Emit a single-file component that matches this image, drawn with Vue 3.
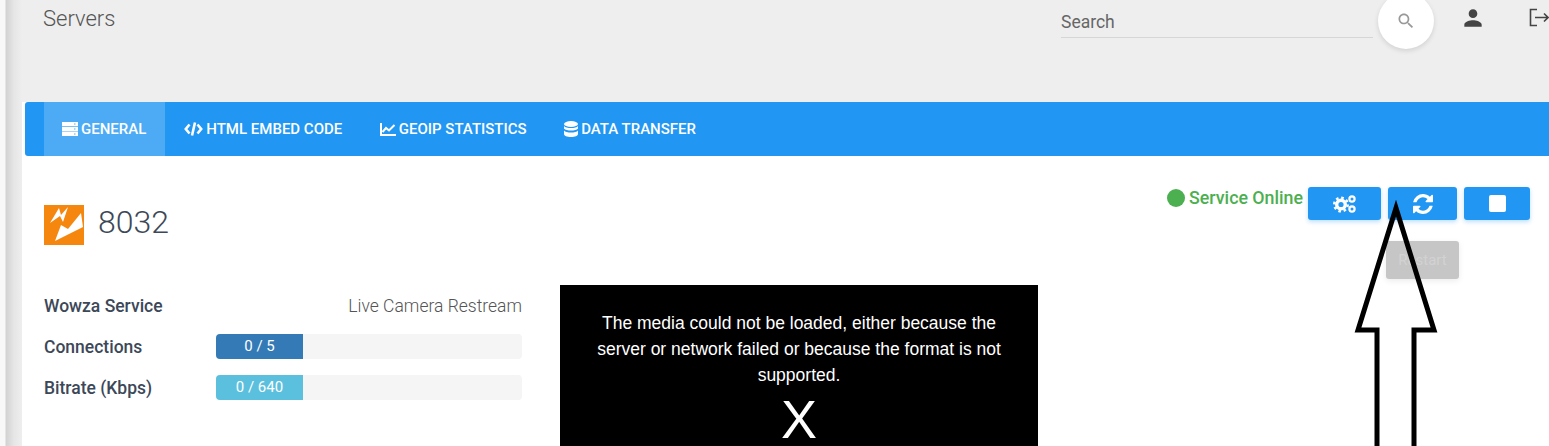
<template>
  <div class="page">
    <div class="edge"></div>
    <div class="main">
      <header class="topbar">
        <div class="page-title">Servers</div>
        <div class="search">
          <span>Search</span>
        </div>
        <button class="search-btn">
          <svg width="20" height="20" viewBox="0 0 24 24"><path fill="#999" d="M15.5 14h-.79l-.28-.27C15.41 12.59 16 11.11 16 9.5 16 5.91 13.09 3 9.5 3S3 5.91 3 9.5 5.91 16 9.5 16c1.61 0 3.09-.59 4.23-1.57l.27.28v.79l5 4.99L20.49 19l-4.99-5zm-6 0C7.01 14 5 11.99 5 9.5S7.01 5 9.5 5 14 7.01 14 9.5 11.99 14 9.5 14z"/></svg>
        </button>
        <svg class="user-icon" width="26" height="26" viewBox="0 0 24 24"><path fill="#444" d="M12 12c2.21 0 4-1.79 4-4s-1.79-4-4-4-4 1.79-4 4 1.79 4 4 4zm0 2c-2.67 0-8 1.34-8 4v2h16v-2c0-2.66-5.33-4-8-4z"/></svg>
        <svg class="logout-icon" width="20" height="20" viewBox="0 0 20 20" fill="none" stroke="#444" stroke-width="1.6"><path d="M8 1.500H1.500v16H8"/><path d="M6 9.500h13M15 5.500l4 4-4 4"/></svg>
      </header>

      <nav class="tabs">
        <a v-for="tab in tabs" :key="tab.label" class="tab" :class="{ active: tab.active }">
          <svg v-if="tab.icon === 'server'" width="16" height="14" viewBox="0 0 16 14" fill="#fff">
            <path d="M0 0h16v4.300H0zM0 4.900h16v4.300H0zM0 9.700h16V14H0z"/>
            <path fill="#5aaff3" d="M12 1.500h1.500v1H12zM12 6.500h1.500v1H12zM12 11.500h1.500v1H12z"/>
          </svg>
          <svg v-else-if="tab.icon === 'code'" width="19" height="14" viewBox="0 0 19 14" fill="none" stroke="#fff" stroke-width="2.600">
            <path d="M5.500 2.500 1.800 7l3.700 4.500M13.500 2.500 17.200 7l-3.700 4.500M11 .5 8 13.500"/>
          </svg>
          <svg v-else-if="tab.icon === 'chart'" width="16" height="13" viewBox="0 0 16 13" fill="none" stroke="#fff" stroke-width="2">
            <path d="M1 0v12h15"/>
            <path d="M2.500 9 6 5l3 2.500L14.500 2"/>
          </svg>
          <svg v-else width="14" height="16" viewBox="0 0 14 16" fill="#fff">
            <ellipse cx="7" cy="3" rx="7" ry="3"/>
            <path d="M0 5c1 1.500 4 2 7 2s6-.5 7-2v2.500c-1 1.500-4 2-7 2s-6-.5-7-2zM0 9.500c1 1.500 4 2 7 2s6-.5 7-2V13c0 1.700-3 3-7 3s-7-1.300-7-3z"/>
          </svg>
          <span>{{ tab.label }}</span>
        </a>
      </nav>

      <section class="content">
        <div class="head-row">
          <div class="server-name">
            <svg class="logo" width="40" height="40" viewBox="0 0 40 40">
              <rect width="40" height="40" fill="#f5870f"/>
              <polygon fill="#fff" points="6,18 15,3 17,10 24,2 19,17 16,11"/>
              <polygon fill="#fff" points="11,36 17,20 24,24 37,8 39,22"/>
            </svg>
            <span class="server-id">8032</span>
          </div>
          <div class="actions">
            <div class="status"><i class="dot"></i>Service Online</div>
            <button class="act act-config">
              <svg width="26" height="20" viewBox="0 0 26 20" fill="none" stroke="#fff">
                <circle cx="9" cy="10.500" r="6.800" stroke-width="2.400" stroke-dasharray="2.600 2.740"/>
                <circle cx="9" cy="10.500" r="4.300" stroke-width="3.400"/>
                <circle cx="20" cy="5" r="2.600" stroke-width="2.200"/>
                <circle cx="20" cy="15" r="2.600" stroke-width="2.200"/>
              </svg>
            </button>
            <button class="act act-restart">
              <svg width="20" height="20" viewBox="0 0 1536 1536"><path fill="#fff" d="M1511 928q0 5-1 7-64 268-268 434.500t-478 166.500q-146 0-282.500-55t-243.500-157l-129 129q-19 19-45 19t-45-19-19-45v-448q0-26 19-45t45-19h448q26 0 45 19t19 45-19 45l-137 137q71 66 161 102t187 36q134 0 250-65t186-179q11-17 53-117 8-23 30-23h192q13 0 22.500 9.500t9.500 22.500zm25-800v448q0 26-19 45t-45 19h-448q-26 0-45-19t-19-45 19-45l138-138q-148-137-349-137-134 0-250 65t-186 179q-11 17-53 117-8 23-30 23h-199q-13 0-22.500-9.500t-9.500-22.500v-7q65-268 270-434.500t480-166.500q146 0 284 55.500t245 156.500l130-129q19-19 45-19t45 19 19 45z"/></svg>
              <span class="tooltip">Restart</span>
            </button>
            <button class="act act-stop"><i class="stop"></i></button>
          </div>
        </div>

        <div class="detail-row">
          <div class="info">
            <div class="info-row">
              <b>Wowza Service</b>
              <span class="service-name">Live Camera Restream</span>
            </div>
            <div v-for="bar in bars" :key="bar.label" class="info-row">
              <b>{{ bar.label }}</b>
              <div class="progress">
                <div class="fill" :class="bar.kind">{{ bar.text }}</div>
              </div>
            </div>
          </div>
          <div class="player">
            <p>The media could not be loaded, either because the server or network failed or because the format is not supported.</p>
            <div class="close-x">X</div>
          </div>
        </div>
      </section>
    </div>

    <svg class="arrow" width="90" height="246" viewBox="0 0 90 246" fill="none" stroke="#000" stroke-width="5">
      <path d="M28 246V130H9L47 8l38 122H65v116"/>
    </svg>
  </div>
</template>

<script setup>
const tabs = [
  { label: 'General', icon: 'server', active: true },
  { label: 'HTML Embed Code', icon: 'code' },
  { label: 'GeoIP Statistics', icon: 'chart' },
  { label: 'Data Transfer', icon: 'database' }
]

const bars = [
  { label: 'Connections', text: '0 / 5', kind: 'primary' },
  { label: 'Bitrate (Kbps)', text: '0 / 640', kind: 'info-bar' }
]
</script>

<style>
body {
  margin: 0;
  overflow: hidden;
}
</style>

<style scoped>
.page {
  position: relative;
  display: flex;
  width: 1549px;
  height: 446px;
  overflow: hidden;
  font-family: Roboto, "Liberation Sans", sans-serif;
  background: #fff;
  color: #3c4858;
}

.edge {
  width: 22px;
  flex: none;
  background: linear-gradient(90deg, #f8f8f8 0, #f8f8f8 5px, #d2d2d2 6px, #e6e6e6 14px, #eeeeee 22px);
}

.main {
  flex: 1;
  min-width: 0;
}

.topbar {
  position: relative;
  display: flex;
  height: 102px;
  background: #eeeeee;
  box-sizing: border-box;
  padding-left: 21px;
}

.page-title {
  font-size: 22px;
  font-weight: 300;
  line-height: 38px;
  color: #555;
}

.search {
  position: absolute;
  left: 1039px;
  top: 8px;
  width: 312px;
  height: 30px;
  box-sizing: border-box;
  border-bottom: 1px solid #d6d6d6;
  font-size: 17.5px;
  line-height: 28px;
  color: #666;
}

.search-btn {
  position: absolute;
  left: 1356px;
  top: -7px;
  width: 56px;
  height: 56px;
  border: 0;
  border-radius: 50%;
  background: #fff;
  box-shadow: 0 2px 5px rgba(0, 0, 0, 0.12);
  display: flex;
  align-items: center;
  justify-content: center;
}

.user-icon {
  position: absolute;
  left: 1438px;
  top: 5px;
}

.logout-icon {
  position: absolute;
  left: 1507px;
  top: 8px;
}

.tabs {
  display: flex;
  height: 54px;
  margin-left: 3px;
  padding-left: 19px;
  background: #2196f3;
  border-radius: 3px 0 0 3px;
}

.tab {
  display: flex;
  align-items: center;
  gap: 3px;
  padding: 0 19px 0 18.5px;
  font-size: 15px;
  font-weight: 500;
  text-transform: uppercase;
  color: #fff;
}

.tab.active {
  padding-left: 18px;
  margin-right: 0.5px;
  background: #4dabf5;
}

.content {
  padding: 31px 19px 0 22px;
}

.head-row {
  display: flex;
  justify-content: space-between;
  align-items: flex-start;
  height: 98px;
}

.server-name {
  display: flex;
  align-items: center;
  gap: 14px;
  margin-top: 18px;
  font-size: 32px;
  font-weight: 300;
  color: #3c4858;
}

.server-id {
  margin-top: -6px;
}

.logo {
  display: block;
}

.actions {
  display: flex;
  align-items: flex-start;
  gap: 7px;
}

.status {
  display: flex;
  align-items: center;
  gap: 4px;
  height: 21px;
  margin-right: -2px;
  font-size: 17.8px;
  font-weight: 500;
  color: #4caf50;
}

.dot {
  width: 18px;
  height: 18px;
  border-radius: 50%;
  background: #4caf50;
}

.act {
  position: relative;
  height: 33px;
  padding: 0;
  border: 0;
  border-radius: 3px;
  background: #2196f3;
  box-shadow: 0 2px 4px rgba(33, 150, 243, 0.3);
  display: flex;
  align-items: center;
  justify-content: center;
}

.act-config {
  width: 73px;
}

.act-restart {
  width: 69px;
}

.act-stop {
  width: 66px;
}

.stop {
  width: 17px;
  height: 17px;
  border-radius: 2px;
  background: #fff;
}

.tooltip {
  position: absolute;
  left: -2px;
  top: 54px;
  width: 73px;
  height: 38px;
  border-radius: 3px;
  background: #c6c6c6;
  box-shadow: 0 2px 6px rgba(0, 0, 0, 0.08);
  font-family: Roboto, sans-serif;
  font-size: 15px;
  line-height: 38px;
  text-align: center;
  color: #d2d2d2;
}

.detail-row {
  display: flex;
  gap: 38px;
}

.info {
  width: 478px;
  flex: none;
  padding-top: 8px;
}

.info-row {
  display: flex;
  align-items: center;
  height: 25px;
  margin-bottom: 16px;
  font-size: 17.5px;
}

.info-row b {
  width: 172px;
  flex: none;
  font-weight: 500;
  color: #3c4858;
}

.service-name {
  flex: 1;
  text-align: right;
  font-weight: 300;
  color: #555;
}

.progress {
  flex: 1;
  height: 25px;
  border-radius: 4px;
  overflow: hidden;
  background: #f5f5f5;
}

.fill {
  width: 87px;
  height: 100%;
  font-size: 15px;
  line-height: 25px;
  text-align: center;
  color: #fff;
}

.fill.primary {
  background: #337ab7;
}

.fill.info-bar {
  background: #5bc0de;
}

.player {
  width: 478px;
  height: 161px;
  flex: none;
  padding: 25px 30px 0;
  box-sizing: border-box;
  background: #000;
  color: #fff;
  font-family: "Liberation Sans", Arial, sans-serif;
  text-align: center;
}

.player p {
  margin: 0;
  font-size: 17.5px;
  line-height: 26px;
}

.close-x {
  font-size: 54px;
  line-height: 42px;
  margin-top: 10px;
}

.arrow {
  position: absolute;
  left: 1349px;
  top: 200px;
}
</style>
